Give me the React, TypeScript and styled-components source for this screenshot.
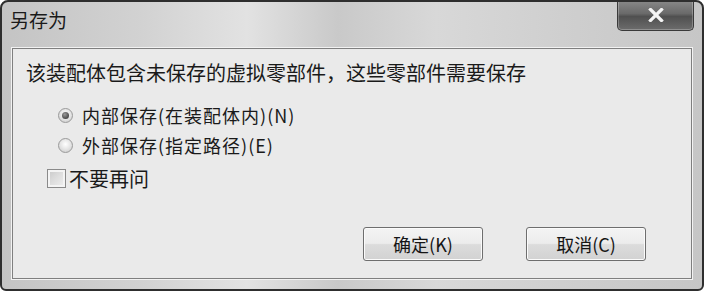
import React from "react";
import styled, { createGlobalStyle } from "styled-components";

const Global = createGlobalStyle`
  html, body { margin: 0; padding: 0; background: #ffffff; }
  body { font-family: "Noto Sans CJK SC", "Noto Sans", sans-serif; }
`;

const Window = styled.div`
  box-sizing: border-box;
  width: 704px;
  height: 291px;
  border: 2px solid #2e2e2e;
  border-radius: 8px 8px 6px 6px;
  background: linear-gradient(90deg, #c4c4c4 0%, #d2d2d2 20%, #e2e2e2 35%, #c9c9c9 48%, #d8d8d8 62%, #cfcfcf 80%, #c6c6c6 100%);
  display: flex;
  flex-direction: column;
  padding: 0 10px 10px 10px;
  overflow: hidden;
`;

const TitleBar = styled.div`
  height: 46px;
  display: flex;
  justify-content: space-between;
  align-items: flex-start;
`;

const Title = styled.div`
  margin-top: 7px;
  margin-left: -2px;
  font-size: 19px;
  line-height: 22px;
  color: #1a1a1a;
`;

const CloseButton = styled.div`
  margin-top: -2px;
  margin-right: -2px;
  width: 77px;
  height: 31px;
  box-sizing: border-box;
  border: 1px solid #3a3a3a;
  border-top: none;
  border-radius: 0 0 5px 5px;
  background: linear-gradient(180deg, #8a8a8a 0%, #6a6a6a 45%, #505050 55%, #6c6c6c 100%);
  box-shadow: inset 0 0 0 1px rgba(255, 255, 255, 0.25);
  display: flex;
  align-items: center;
  justify-content: center;
`;

const Panel = styled.div`
  flex: 1;
  box-sizing: border-box;
  border: 1px solid #7f7f7f;
  box-shadow: 0 0 0 1px #f2f2f2;
  background: #eaeaea;
  padding: 14px 45px 17px 13px;
  display: flex;
  flex-direction: column;
`;

const Message = styled.div`
  font-size: 20px;
  line-height: 20px;
  color: #1a1a1a;
  white-space: nowrap;
`;

const RadioGroup = styled.div`
  margin-top: 20px;
  display: flex;
  flex-direction: column;
  gap: 6px;
  padding-left: 32px;
`;

const OptionRow = styled.div`
  height: 24px;
  display: flex;
  align-items: center;
  gap: 9px;
  font-size: 18px;
  letter-spacing: 1px;
  color: #1a1a1a;
  white-space: nowrap;
`;

const Radio = styled.span<{ $checked?: boolean }>`
  box-sizing: border-box;
  width: 15px;
  height: 15px;
  border-radius: 50%;
  border: 1px solid #9a9a9a;
  background: radial-gradient(circle at 50% 40%, #ffffff 0%, #e2e2e2 55%, #c4c4c4 100%);
  display: flex;
  align-items: center;
  justify-content: center;
  &::after {
    content: "";
    display: ${(p) => (p.$checked ? "block" : "none")};
    width: 7px;
    height: 7px;
    border-radius: 50%;
    background: radial-gradient(circle at 40% 35%, #9a9a9a 0%, #4a4a4a 70%, #3a3a3a 100%);
  }
`;

const CheckRow = styled.div`
  margin-top: 9px;
  padding-left: 21px;
  height: 24px;
  display: flex;
  align-items: center;
  gap: 3px;
  font-size: 20px;
  color: #1a1a1a;
`;

const CheckBox = styled.span`
  box-sizing: border-box;
  width: 19px;
  height: 19px;
  border: 1px solid #8a8a8a;
  background: linear-gradient(135deg, #c8c8c8 0%, #dedede 50%, #f0f0f0 100%);
  box-shadow: inset 0 0 0 2px #f4f4f4;
`;

const ButtonRow = styled.div`
  margin-top: auto;
  display: flex;
  justify-content: flex-end;
  gap: 43px;
`;

const Button = styled.div`
  box-sizing: border-box;
  width: 120px;
  height: 34px;
  border: 1px solid #6e6e6e;
  border-radius: 3px;
  background: linear-gradient(180deg, #f4f4f4 0%, #ececec 48%, #dcdcdc 52%, #d2d2d2 100%);
  box-shadow: inset 0 0 0 1px #fbfbfb;
  display: flex;
  align-items: center;
  justify-content: center;
  font-size: 18px;
  color: #151515;
`;

export default function App() {
  return (
    <>
      <Global />
      <Window>
        <TitleBar>
          <Title>另存为</Title>
          <CloseButton>
            <svg width="16" height="14" viewBox="0 0 16 14">
              <path d="M2.5 1.5 L13.5 12.5 M13.5 1.5 L2.5 12.5" stroke="#f4f4f4" strokeWidth="3.2" strokeLinecap="square" />
            </svg>
          </CloseButton>
        </TitleBar>
        <Panel>
          <Message>该装配体包含未保存的虚拟零部件，这些零部件需要保存</Message>
          <RadioGroup>
            <OptionRow>
              <Radio $checked />
              <span>内部保存(在装配体内)(N)</span>
            </OptionRow>
            <OptionRow>
              <Radio />
              <span>外部保存(指定路径)(E)</span>
            </OptionRow>
          </RadioGroup>
          <CheckRow>
            <CheckBox />
            <span>不要再问</span>
          </CheckRow>
          <ButtonRow>
            <Button>确定(K)</Button>
            <Button>取消(C)</Button>
          </ButtonRow>
        </Panel>
      </Window>
    </>
  );
}
